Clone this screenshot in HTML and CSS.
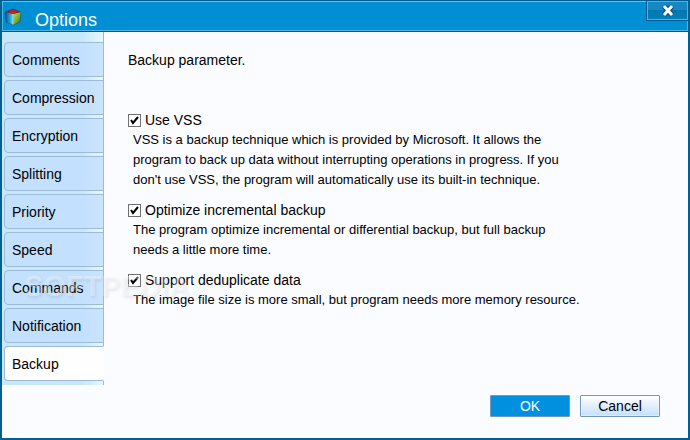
FILE: index.html
```html
<!DOCTYPE html>
<html lang="en">
<head>
  <meta charset="UTF-8" />
  <meta name="viewport" content="width=device-width, initial-scale=1.0"/>
  <title>Options</title>
  <link rel="stylesheet" href="styles.css">
</head>
<body>
  <div class="window">

    <!-- Title bar -->
    <header class="titlebar">
      <svg class="logo" width="18" height="18" viewBox="0 0 18 18" aria-hidden="true">
        <defs>
          <linearGradient id="left" x1="0" y1="0" x2="1" y2="0">
            <stop offset="0" stop-color="#0b5078"/>
            <stop offset="0.5" stop-color="#1794cf"/>
            <stop offset="1" stop-color="#6bd3f0"/>
          </linearGradient>
          <linearGradient id="right" x1="0" y1="0" x2="1" y2="1">
            <stop offset="0" stop-color="#b5dc4c"/>
            <stop offset="0.5" stop-color="#79b535"/>
            <stop offset="1" stop-color="#2c5c22"/>
          </linearGradient>
        </defs>
        <path d="M1 4 L9 6 L9 17 L2 14 Z" fill="url(#left)"/>
        <path d="M9 6 L17 4 L16 14 L9 17 Z" fill="url(#right)"/>
        <path d="M1 4 L9 1 L17 4 L9 6 Z" fill="#981c26"/>
        <path d="M5 4 L9 2 L13 4 L9 6 Z" fill="#c9222e"/>
        <path d="M9 6 L9 17" stroke="#b9e6d8" stroke-opacity="0.6"/>
        <path d="M1 4 L9 1 L17 4 L16 14 L9 17 L2 14 Z" fill="none" stroke="#35464a" stroke-opacity="0.5"/>
      </svg>
      <h1>Options</h1>
      <button type="button" class="close" aria-label="Close">
        <svg width="14" height="13" viewBox="0 0 14 13">
          <path d="M3 2 L11 11 M11 2 L3 11" stroke="#00507f" stroke-width="5"/>
          <path d="M3 2 L11 11 M11 2 L3 11" stroke="#fff" stroke-width="3"/>
        </svg>
      </button>
    </header>

    <div class="main">
      <!-- Tabs -->
      <nav class="tabs">
        <a href="#comments">Comments</a>
        <a href="#compression">Compression</a>
        <a href="#encryption">Encryption</a>
        <a href="#splitting">Splitting</a>
        <a href="#priority">Priority</a>
        <a href="#speed">Speed</a>
        <a href="#commands">Commands</a>
        <a href="#notification">Notification</a>
        <a href="#backup" class="active">Backup</a>
      </nav>

      <!-- Backup options -->
      <form class="content" id="backup">
        <h2>Backup parameter.</h2>
        <div class="option">
          <label><input type="checkbox" checked> Use VSS</label>
          <p>VSS is a backup technique which is provided by Microsoft. It allows the<br>
            program to back up data without interrupting operations in progress. If you<br>
            don't use VSS, the program will automatically use its built-in technique.</p>
        </div>
        <div class="option">
          <label><input type="checkbox" checked> Optimize incremental backup</label>
          <p>The program optimize incremental or differential backup, but full backup<br>
            needs a little more time.</p>
        </div>
        <div class="option">
          <label><input type="checkbox" checked> Support deduplicate data</label>
          <p>The image file size is more small, but program needs more memory resource.</p>
        </div>
      </form>
      <div class="watermark">SOFTPEDIA<sup>®</sup></div>
    </div>

    <footer class="actions">
      <button type="submit" form="backup" class="ok">OK</button>
      <button type="button">Cancel</button>
    </footer>
  </div>
</body>
</html>
```

FILE: styles.css
```css
* {
  margin: 0;
  box-sizing: border-box;
}

body {
  font-family: "Liberation Sans", Arial, sans-serif;
  font-size: 14px;
  line-height: 20px;
  color: #000;
  background: #005b8e;
}

.window {
  min-height: 100vh;
  display: flex;
  flex-direction: column;
  background: #fbfcff;
  border: 2px solid #005f93;
  border-top: none;
}

/* Title bar */
.titlebar {
  height: 32px;
  display: flex;
  align-items: flex-start;
  background: #008fd3;
  border-top: 1px solid #005b8e;
  border-bottom: 1px solid #005b8e;
  box-shadow: inset 0 1px #62c0ec, inset 1px 0 #4db4e3, inset -1px 0 #4db4e3, inset 0 -1px #4db4e3;
}

.logo {
  margin: 7px 0 0 2px;
}

h1 {
  flex: 1;
  margin: 9px 0 0 13px;
  font-size: 18px;
  font-weight: normal;
  line-height: 20px;
  color: #fff;
}

.close {
  width: 42px;
  height: 20px;
  padding: 0;
  display: flex;
  align-items: center;
  justify-content: center;
  border: 1px solid #005b8e;
  border-top: none;
  border-right: none;
  background: linear-gradient(#1488c0 50%, #0076af 50%, #0083bd);
  box-shadow: inset 0 0 0 1px #50b2dd;
}

/* Sidebar tabs */
.main {
  position: relative;
  display: flex;
}

.tabs {
  width: 102px;
  flex: none;
  display: flex;
  flex-direction: column;
  gap: 3px;
  padding: 10px 0 4px 2px;
  background: linear-gradient(to right, #c6e9fa 80%, #e9f7fd);
  border-right: 1px solid #9bb8d6;
}

.tabs a {
  height: 35px;
  margin-right: -1px;
  padding-left: 7px;
  line-height: 35px;
  color: #000;
  text-decoration: none;
  background: linear-gradient(to right, #c3e0ff 80%, #cae4fe);
  border: 1px solid #9fb9d8;
  border-radius: 4px 0 0 4px;
}

.tabs .active {
  background: #fefeff;
  border-right-color: #fefeff;
}

/* Options */
.content {
  flex: 1;
  padding: 18px 24px 0;
}

h2 {
  margin-bottom: 40px;
  font-size: 14px;
  font-weight: normal;
}

.option {
  margin-bottom: 10px;
}

.option label {
  display: flex;
  align-items: center;
  gap: 4px;
}

.option p {
  padding-left: 5px;
  font-size: 13px;
}

.option input {
  appearance: none;
  width: 13px;
  height: 13px;
  border: 1px solid #707070;
  background: #fff url("data:image/svg+xml,%3Csvg xmlns='http://www.w3.org/2000/svg' viewBox='0 0 11 11'%3E%3Cpath d='M2 5 L4 8 L9 2' fill='none' stroke='%23000' stroke-width='2'/%3E%3C/svg%3E");
}

/* Site mark */
.watermark {
  position: absolute;
  left: 22px;
  top: 238px;
  font-size: 29px;
  font-weight: bold;
  line-height: 32px;
  color: rgba(255, 255, 255, 0.35);
  text-shadow: 1px 2px 3px rgba(0, 0, 0, 0.08);
  pointer-events: none;
}

.watermark sup {
  font-size: 8px;
  line-height: 8px;
  vertical-align: 14px;
}

/* Buttons */
.actions {
  display: flex;
  justify-content: flex-end;
  gap: 10px;
  padding: 10px 28px 21px;
}

.actions button {
  width: 80px;
  height: 22px;
  padding: 0;
  font: inherit;
  color: #000;
  border: 1px solid #7399bf;
  border-radius: 1px;
  background: linear-gradient(#fff, #c4dffc);
  box-shadow: inset 0 0 0 1px rgba(255, 255, 255, 0.4);
}

.actions .ok {
  color: #fff;
  background: #0090df;
  box-shadow: none;
}
```
